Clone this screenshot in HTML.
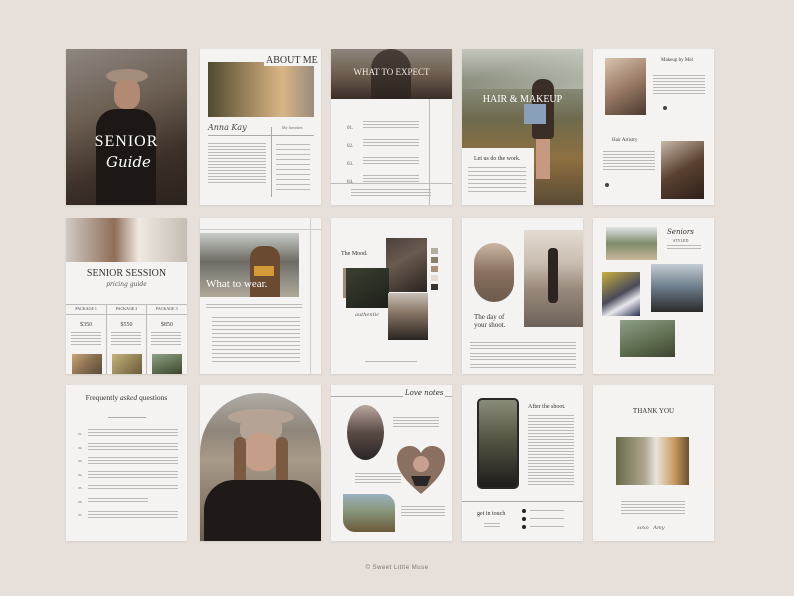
<!DOCTYPE html>
<html><head><meta charset="utf-8"><style>
*{margin:0;padding:0;box-sizing:border-box}
body{width:794px;height:596px;background:#e6dfda;position:relative;overflow:hidden;font-family:"Liberation Serif",serif}
.p{position:absolute;width:121px;height:156px;background:#f4f3f1;overflow:hidden;box-shadow:0 1px 2px rgba(0,0,0,.08)}
.a{position:absolute;white-space:nowrap}
.t{position:absolute;background:repeating-linear-gradient(#bdbab6 0 1px,transparent 1px 3px)}
.sc{font-family:"DejaVu Serif",serif;font-style:italic}
.ph1{background:linear-gradient(160deg,#8d8780,#6a5c50 40%,#3d3129 70%,#2a221d)}
.warm{background:linear-gradient(135deg,#c9a676,#8b7052 50%,#5b4a3a)}
.skin{background:linear-gradient(150deg,#d8c3b0,#9a7b66 50%,#4a3a30)}
.dark{background:linear-gradient(150deg,#5e5650,#2e2925)}
.green{background:linear-gradient(160deg,#8ea08a,#5d6b4d 60%,#3f4432)}
</style></head><body>

<!-- Row 1 -->
<div class="p ph1" style="left:66px;top:49px">
  <div class="a" style="left:40px;top:20px;width:42px;height:14px;border-radius:50%;background:#a38d7a"></div>
  <div class="a" style="left:48px;top:30px;width:26px;height:30px;border-radius:40%;background:#b08a72"></div>
  <div class="a" style="left:30px;top:60px;width:60px;height:96px;background:#1d1815;border-radius:20px 20px 0 0"></div>
  <div class="a" style="left:0;top:84px;width:121px;text-align:center;color:#fff;font-size:16px;letter-spacing:1px">SENIOR</div>
  <div class="a sc" style="left:40px;top:104px;color:#fff;font-size:15px">Guide</div>
</div>

<div class="p" style="left:200px;top:49px">
  <div class="a warm" style="left:8px;top:13px;width:106px;height:55px;background:linear-gradient(90deg,#4f4a30,#a08860 40%,#d9b585 70%,#9a8c7e)"></div>
  <div class="a" style="left:64px;top:6px;font-size:10px;color:#333;background:#f4f3f1;padding:0 2px">ABOUT ME</div>
  <div class="a sc" style="left:8px;top:74px;font-size:8px;color:#444">Anna Kay</div>
  <div class="a" style="left:82px;top:76px;font-size:4px;color:#666">My favorites</div>
  <div class="a" style="left:8px;top:86px;width:106px;height:1px;background:#aaa"></div>
  <div class="a" style="left:71px;top:78px;width:1px;height:70px;background:#aaa"></div>
  <div class="t" style="left:8px;top:94px;width:58px;height:40px"></div>
  <div class="t" style="left:76px;top:95px;width:34px;height:46px;background:repeating-linear-gradient(#bdbab6 0 1px,transparent 1px 5px)"></div>
</div>

<div class="p" style="left:331px;top:49px">
  <div class="a ph1" style="left:0;top:0;width:121px;height:50px;background:linear-gradient(180deg,#8d867c,#6e5e50 50%,#3a2e28)"></div>
  <div class="a" style="left:40px;top:0;width:40px;height:50px;background:#2a211c;border-radius:20px 20px 0 0;opacity:.7"></div>
  <div class="a" style="left:0;top:18px;width:121px;text-align:center;color:#f2ece4;font-size:9px">WHAT TO EXPECT</div>
  <div class="a" style="left:98px;top:50px;width:1px;height:106px;background:#bbb"></div>
  <div class="a" style="left:0;top:134px;width:121px;height:1px;background:#bbb"></div>
  <div class="a" style="left:16px;top:71px;font-size:5px;color:#555;line-height:18px">01.<br>02.<br>03.<br>04.</div>
  <div class="t" style="left:32px;top:72px;width:56px;height:7px"></div>
  <div class="t" style="left:32px;top:90px;width:56px;height:7px"></div>
  <div class="t" style="left:32px;top:108px;width:56px;height:7px"></div>
  <div class="t" style="left:32px;top:126px;width:56px;height:7px"></div>
  <div class="t" style="left:20px;top:140px;width:80px;height:7px"></div>
</div>

<div class="p" style="left:462px;top:49px;background:linear-gradient(180deg,#c4c6bc,#8e9282 20%,#6e6a4e 45%,#8e7040 70%,#5a4a35)">
  <div class="a" style="left:0;top:0;width:121px;height:40px;background:linear-gradient(160deg,transparent 40%,rgba(220,225,215,.5))"></div>
  <div class="a" style="left:70px;top:30px;width:22px;height:60px;background:#3a2e26;border-radius:10px 10px 4px 4px"></div>
  <div class="a" style="left:62px;top:55px;width:22px;height:20px;background:#8aa0b8"></div>
  <div class="a" style="left:74px;top:90px;width:14px;height:40px;background:#c59a80"></div>
  <div class="a" style="left:0;top:45px;width:121px;text-align:center;color:#fff;font-size:10px">HAIR &amp; MAKEUP</div>
  <div class="a" style="left:0;top:99px;width:72px;height:57px;background:#f4f3f1"></div>
  <div class="a" style="left:12px;top:107px;font-size:6px;color:#333">Let us do the work.</div>
  <div class="t" style="left:6px;top:118px;width:58px;height:28px;background:repeating-linear-gradient(#bdbab6 0 1px,transparent 1px 4px)"></div>
</div>

<div class="p" style="left:593px;top:49px">
  <div class="a skin" style="left:12px;top:9px;width:41px;height:57px"></div>
  <div class="a" style="left:68px;top:9px;font-size:5px;color:#444">Makeup by Mel</div>
  <div class="t" style="left:60px;top:26px;width:52px;height:19px"></div>
  <div class="a" style="left:70px;top:57px;width:4px;height:4px;border-radius:50%;background:#444"></div>
  <div class="a" style="left:19px;top:89px;font-size:5px;color:#444">Hair Artistry</div>
  <div class="t" style="left:10px;top:102px;width:52px;height:20px"></div>
  <div class="a" style="left:12px;top:134px;width:4px;height:4px;border-radius:50%;background:#444"></div>
  <div class="a dark" style="left:68px;top:92px;width:43px;height:58px;background:linear-gradient(150deg,#c8b8a8,#5a4030 50%,#2d201a)"></div>
</div>

<!-- Row 2 -->
<div class="p" style="left:66px;top:218px">
  <div class="a skin" style="left:0;top:0;width:121px;height:44px;background:linear-gradient(90deg,#d0cac4,#8f6e58 40%,#efe9e2 60%,#c5bdb4)"></div>
  <div class="a" style="left:0;top:50px;width:121px;text-align:center;font-size:10px;color:#333">SENIOR SESSION</div>
  <div class="a sc" style="left:0;top:63px;width:121px;text-align:center;font-size:6px;color:#555">pricing guide</div>
  <div class="a" style="left:0;top:86px;width:121px;height:1px;background:#bbb"></div>
  <div class="a" style="left:0;top:96px;width:121px;height:1px;background:#bbb"></div>
  <div class="a" style="left:40px;top:86px;width:1px;height:70px;background:#bbb"></div>
  <div class="a" style="left:80px;top:86px;width:1px;height:70px;background:#bbb"></div>
  <div class="a" style="left:0;top:88px;width:121px;font-size:4px;color:#444;display:flex;justify-content:space-around"><span>PACKAGE 1</span><span>PACKAGE 2</span><span>PACKAGE 3</span></div>
  <div class="a" style="left:0;top:104px;width:121px;font-size:6px;color:#444;display:flex;justify-content:space-around"><span>$350</span><span>$550</span><span>$850</span></div>
  <div class="t" style="left:5px;top:114px;width:30px;height:15px"></div>
  <div class="t" style="left:45px;top:114px;width:30px;height:15px"></div>
  <div class="t" style="left:85px;top:114px;width:30px;height:15px"></div>
  <div class="a warm" style="left:6px;top:136px;width:30px;height:20px"></div>
  <div class="a warm" style="left:46px;top:136px;width:30px;height:20px;background:linear-gradient(135deg,#c5b27a,#6a5a3a)"></div>
  <div class="a green" style="left:86px;top:136px;width:30px;height:20px"></div>
</div>

<div class="p" style="left:200px;top:218px">
  <div class="a" style="left:0;top:11px;width:121px;height:1px;background:#ccc"></div>
  <div class="a" style="left:110px;top:0;width:1px;height:156px;background:#ccc"></div>
  <div class="a" style="left:0;top:15px;width:99px;height:64px;background:linear-gradient(180deg,#c8ccc8,#6c6a62 45%,#8d8a82 70%,#b0a898)"></div>
  <div class="a" style="left:50px;top:28px;width:30px;height:51px;background:#6a4a30;border-radius:12px 12px 0 0"></div>
  <div class="a" style="left:54px;top:48px;width:20px;height:10px;background:#d49a3a"></div>
  <div class="a" style="left:6px;top:60px;font-size:11px;color:#fff">What to wear.</div>
  <div class="t" style="left:6px;top:86px;width:96px;height:6px"></div>
  <div class="t" style="left:12px;top:99px;width:88px;height:45px;background:repeating-linear-gradient(#bdbab6 0 1px,transparent 1px 4px)"></div>
</div>

<div class="p" style="left:331px;top:218px">
  <div class="a" style="left:10px;top:33px;font-size:6px;color:#333">The Mood.</div>
  <div class="a dark" style="left:55px;top:20px;width:41px;height:54px;background:linear-gradient(150deg,#4a403a,#6a5a50 40%,#2a2420)"></div>
  <div class="a" style="left:12px;top:50px;width:6px;height:30px;background:#a08a78"></div>
  <div class="a dark" style="left:15px;top:50px;width:43px;height:40px;background:linear-gradient(150deg,#3a4030,#1e1f1a)"></div>
  <div class="a" style="left:57px;top:75px;width:40px;height:47px;background:linear-gradient(180deg,#c8c0b8,#8a7868 40%,#2a2420)"></div>
  <div class="a" style="left:100px;top:30px;width:7px;height:6px;background:#b4ad9e"></div>
  <div class="a" style="left:100px;top:39px;width:7px;height:6px;background:#8a7e6c"></div>
  <div class="a" style="left:100px;top:48px;width:7px;height:6px;background:#ad907c"></div>
  <div class="a" style="left:100px;top:57px;width:7px;height:6px;background:#e6dcd6"></div>
  <div class="a" style="left:100px;top:66px;width:7px;height:6px;background:#3a302c"></div>
  <div class="a sc" style="left:24px;top:94px;font-size:5px;color:#555">authentic</div>
  <div class="t" style="left:34px;top:143px;width:52px;height:1px"></div>
</div>

<div class="p" style="left:462px;top:218px">
  <div class="a" style="left:12px;top:25px;width:40px;height:59px;border-radius:20px;background:linear-gradient(180deg,#cbb6a4,#8a705e 50%,#6a5a4c)"></div>
  <div class="a" style="left:62px;top:12px;width:59px;height:97px;background:linear-gradient(180deg,#e4dcd2,#c8bcb0 35%,#9a8a7c 60%,#6d625a)"></div>
  <div class="a" style="left:86px;top:30px;width:10px;height:55px;background:#2c2420;border-radius:4px"></div>
  <div class="a" style="left:12px;top:95px;font-size:7px;color:#333;line-height:8px">The day of<br>your shoot.</div>
  <div class="t" style="left:8px;top:124px;width:106px;height:7px"></div>
  <div class="t" style="left:8px;top:135px;width:106px;height:7px"></div>
  <div class="t" style="left:8px;top:146px;width:106px;height:4px"></div>
</div>

<div class="p" style="left:593px;top:218px">
  <div class="a" style="left:13px;top:9px;width:51px;height:33px;background:linear-gradient(180deg,#e0e4e4,#7d8c6a 50%,#c8b69a)"></div>
  <div class="a sc" style="left:74px;top:10px;font-size:7px;color:#333">Seniors</div>
  <div class="a" style="left:80px;top:20px;font-size:4px;color:#555">STYLED</div>
  <div class="t" style="left:74px;top:27px;width:34px;height:5px"></div>
  <div class="a" style="left:9px;top:54px;width:38px;height:44px;background:linear-gradient(150deg,#c8b040,#4a4a5a 50%,#e8e8ee 70%,#2a3050)"></div>
  <div class="a" style="left:58px;top:46px;width:52px;height:48px;background:linear-gradient(180deg,#c4ccd2,#6a7a88 50%,#2a2a2a)"></div>
  <div class="a green" style="left:27px;top:102px;width:55px;height:37px"></div>
</div>

<!-- Row 3 -->
<div class="p" style="left:66px;top:385px">
  <div class="a" style="left:0;top:8px;width:121px;text-align:center;font-size:7.5px;color:#333">Frequently <i>asked</i> questions</div>
  <div class="a" style="left:42px;top:32px;width:38px;height:1px;background:#aaa"></div>
  <div class="a" style="left:12px;top:43px;font-size:3.5px;color:#666;line-height:13.5px">01.<br>02.<br>03.<br>04.<br>05.<br>06.<br>07.</div>
  <div class="t" style="left:22px;top:44px;width:90px;height:9px"></div>
  <div class="t" style="left:22px;top:58px;width:90px;height:9px"></div>
  <div class="t" style="left:22px;top:72px;width:90px;height:9px"></div>
  <div class="t" style="left:22px;top:86px;width:90px;height:7px"></div>
  <div class="t" style="left:22px;top:100px;width:90px;height:5px"></div>
  <div class="t" style="left:22px;top:113px;width:60px;height:5px"></div>
  <div class="t" style="left:22px;top:126px;width:90px;height:9px"></div>
</div>

<div class="p" style="left:200px;top:385px">
  <div class="a" style="left:0;top:8px;width:121px;height:150px;border-radius:60px 60px 0 0;background:linear-gradient(180deg,#b0aca6,#8f857a 25%,#a89a88 45%,#8c7e70 70%,#6a5e54)"></div>
  <div class="a" style="left:28px;top:24px;width:66px;height:16px;border-radius:50%;background:#b5a496"></div>
  <div class="a" style="left:40px;top:34px;width:42px;height:20px;border-radius:8px;background:#b5a496"></div>
  <div class="a" style="left:44px;top:48px;width:34px;height:38px;border-radius:40%;background:#c49e88"></div>
  <div class="a" style="left:34px;top:52px;width:12px;height:50px;background:#7a5a40;border-radius:6px"></div>
  <div class="a" style="left:76px;top:52px;width:12px;height:50px;background:#7a5a40;border-radius:6px"></div>
  <div class="a" style="left:4px;top:95px;width:118px;height:61px;background:#1f1a18;border-radius:30px 30px 0 0"></div>
</div>

<div class="p" style="left:331px;top:385px">
  <div class="a" style="left:0;top:11px;width:121px;height:1px;background:#aaa"></div>
  <div class="a sc" style="left:72px;top:4px;font-size:7px;color:#333;background:#f4f3f1;padding:0 2px">Love notes</div>
  <div class="a" style="left:16px;top:20px;width:37px;height:55px;border-radius:50%;background:linear-gradient(180deg,#b8a8a0,#5a4a44 50%,#2a2626)"></div>
  <div class="t" style="left:62px;top:32px;width:46px;height:10px"></div>
  <div class="t" style="left:24px;top:88px;width:46px;height:10px"></div>
  <svg class="a" style="left:66px;top:61px" width="48" height="49" viewBox="0 0 48 49"><path d="M24 48 C10 36 0 26 0 13 C0 5 6 0 13 0 C18 0 22 3 24 7 C26 3 30 0 35 0 C42 0 48 5 48 13 C48 26 38 36 24 48Z" fill="#8a7060"/><path d="M14 30 L34 30 L30 40 L18 40Z" fill="#2a2626"/><circle cx="24" cy="18" r="8" fill="#c8a090"/></svg>
  <div class="a" style="left:12px;top:109px;width:52px;height:38px;border-radius:0 12px 0 12px;background:linear-gradient(180deg,#9ab0c0,#8a9a80 40%,#6a5a3a)"></div>
  <div class="t" style="left:70px;top:121px;width:44px;height:10px"></div>
</div>

<div class="p" style="left:462px;top:385px">
  <div class="a" style="left:15px;top:13px;width:42px;height:91px;border-radius:5px;background:#2a2624;padding:2px"><div style="width:100%;height:100%;border-radius:3px;background:linear-gradient(180deg,#8a8c7a,#5a5a48 40%,#1e1c1a)"></div></div>
  <div class="a" style="left:66px;top:19px;font-size:6px;color:#333">After the shoot.</div>
  <div class="t" style="left:66px;top:30px;width:46px;height:70px"></div>
  <div class="a" style="left:0;top:116px;width:121px;height:1px;background:#aaa"></div>
  <div class="a" style="left:15px;top:126px;font-size:6px;color:#333">get in touch</div>
  <div class="t" style="left:22px;top:138px;width:16px;height:5px"></div>
  <div class="a" style="left:60px;top:124px;width:4px;height:4px;border-radius:50%;background:#222"></div>
  <div class="a" style="left:60px;top:132px;width:4px;height:4px;border-radius:50%;background:#222"></div>
  <div class="a" style="left:60px;top:140px;width:4px;height:4px;border-radius:50%;background:#222"></div>
  <div class="t" style="left:68px;top:125px;width:34px;height:1px"></div>
  <div class="t" style="left:68px;top:133px;width:34px;height:1px"></div>
  <div class="t" style="left:68px;top:141px;width:34px;height:1px"></div>
</div>

<div class="p" style="left:593px;top:385px">
  <div class="a" style="left:0;top:22px;width:121px;text-align:center;font-size:7px;color:#333">THANK YOU</div>
  <div class="a" style="left:23px;top:52px;width:73px;height:48px;background:linear-gradient(90deg,#6a6a4a,#b0a890 40%,#e8e4dc 55%,#c89a60 80%,#6a5030)"></div>
  <div class="t" style="left:28px;top:116px;width:64px;height:14px"></div>
  <div class="a sc" style="left:44px;top:140px;font-size:5px;color:#555">xoxo &nbsp; Amy</div>
</div>

<div class="a" style="left:0;top:565px;width:794px;text-align:center;font-family:'Liberation Sans',sans-serif;font-size:6px;color:#7a7470;letter-spacing:.5px">© Sweet Little Muse</div>
</body></html>
